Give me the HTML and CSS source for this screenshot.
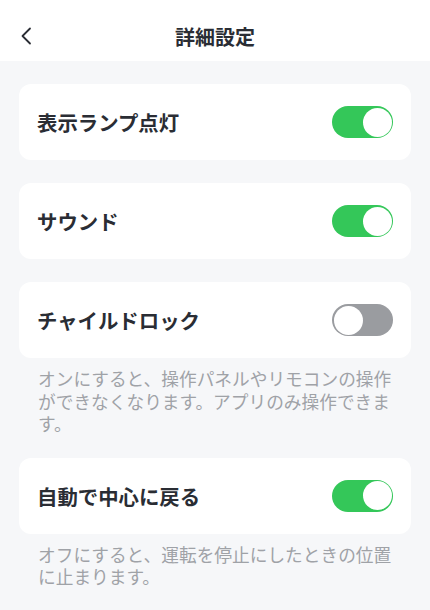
FILE: index.html
```html
<!DOCTYPE html>
<html lang="ja">
<head>
<meta charset="utf-8">
<link rel="stylesheet" href="styles.css">
</head>
<body>
<div class="app">
  <header class="header">
    <span class="back">
      <svg width="12" height="18" viewBox="0 0 12 18"><path d="M10 1.5 L2.5 9 L10 16.5" fill="none" stroke="#2a2d34" stroke-width="1.8" stroke-linecap="round" stroke-linejoin="round"/></svg>
    </span>
    <h1 class="title">詳細設定</h1>
  </header>
  <main class="content">
    <section class="group">
      <div class="card"><span class="label">表示ランプ点灯</span><span class="toggle on"><span class="knob"></span></span></div>
    </section>
    <section class="group">
      <div class="card"><span class="label">サウンド</span><span class="toggle on"><span class="knob"></span></span></div>
    </section>
    <section class="group">
      <div class="card"><span class="label">チャイルドロック</span><span class="toggle off"><span class="knob"></span></span></div>
      <p class="desc">オンにすると、操作パネルやリモコンの操作ができなくなります。アプリのみ操作できます。</p>
    </section>
    <section class="group">
      <div class="card"><span class="label">自動で中心に戻る</span><span class="toggle on"><span class="knob"></span></span></div>
      <p class="desc">オフにすると、運転を停止にしたときの位置に止まります。</p>
    </section>
  </main>
</div>
</body>
</html>
```
FILE: styles.css
```css
* { box-sizing: border-box; }
html, body { margin: 0; padding: 0; }
body {
  background: #f6f7f9;
  font-family: "Noto Sans CJK JP", "Noto Sans", sans-serif;
  color: #2a2d34;
  width: 430px;
  height: 610px;
  overflow: hidden;
}
.header {
  position: relative;
  height: 61px;
  background: #ffffff;
  display: flex;
  align-items: center;
  justify-content: center;
}
.back {
  position: absolute;
  left: 20px;
  top: 27px;
  width: 12px;
  height: 18px;
  display: flex;
}
.title {
  margin: 0;
  font-size: 20px;
  font-weight: 700;
  line-height: 1;
  padding-top: 13px;
  padding-bottom: 0;
  color: #2a2d34;
}
.content {
  padding: 23px 19px 0 19px;
  display: flex;
  flex-direction: column;
  gap: 23px;
}
.group { display: flex; flex-direction: column; }
.card {
  background: #ffffff;
  border-radius: 12px;
  height: 76px;
  display: flex;
  align-items: center;
  justify-content: space-between;
  padding: 0 18px 0 18px;
}
.label {
  font-size: 20.4px;
  font-weight: 700;
  color: #2a2d34;
  letter-spacing: 0;
}
.toggle {
  width: 61px;
  height: 32px;
  border-radius: 16px;
  padding: 1.5px;
  display: flex;
  align-items: center;
}
.toggle.on { background: #34c759; justify-content: flex-end; }
.toggle.off { background: #9a9ca0; justify-content: flex-start; }
.knob {
  width: 29px;
  height: 29px;
  border-radius: 50%;
  background: #ffffff;
}
.desc {
  margin: 9px 0 0 0;
  padding: 0 18px 0 19px;
  font-size: 17.7px;
  line-height: 22.5px;
  color: #9fa2a7;
  width: 394px;
}
```
